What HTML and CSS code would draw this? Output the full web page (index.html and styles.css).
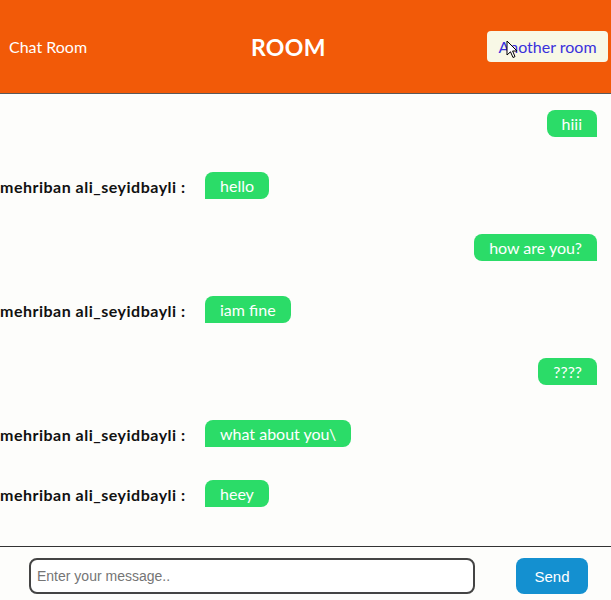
FILE: index.html
```html
<!DOCTYPE html>
<html>
<head>
<meta charset="utf-8">
<link rel="stylesheet" href="styles.css">
</head>
<body>
<div class="page">
  <header class="header">
    <div class="brand">Chat Room</div>
    <div class="title">ROOM</div>
    <button class="room-btn">Another room
      <svg class="cursor" width="12" height="19" viewBox="0 0 12 19"><path d="M1 1 L1 15 L4.5 11.8 L7 17.5 L9 16.6 L6.6 11 L11 11 Z" fill="#fff" stroke="#000" stroke-width="1" stroke-linejoin="round"/></svg>
    </button>
  </header>
  <main class="messages">
    <div class="row out"><span class="bubble">hiii</span></div>
    <div class="row in"><span class="name">mehriban ali_seyidbayli :</span><span class="bubble">hello</span></div>
    <div class="row out"><span class="bubble">how are you?</span></div>
    <div class="row in"><span class="name">mehriban ali_seyidbayli :</span><span class="bubble">iam fine</span></div>
    <div class="row out"><span class="bubble">????</span></div>
    <div class="row in"><span class="name">mehriban ali_seyidbayli :</span><span class="bubble">what about you\</span></div>
    <div class="row in last"><span class="name">mehriban ali_seyidbayli :</span><span class="bubble">heey</span></div>
  </main>
  <footer class="composer">
    <input class="msg-input" type="text" placeholder="Enter your message..">
    <button class="send-btn">Send</button>
  </footer>
</div>
</body>
</html>
```
FILE: styles.css
```css
* { box-sizing: border-box; }
html, body { margin: 0; padding: 0; }
body {
  background: #fdfdfb;
  font-family: "Lato", "Open Sans", sans-serif;
}
.page {
  height: 600px;
  display: flex;
  flex-direction: column;
}
.header {
  height: 94px;
  flex: none;
  background: #f25a08;
  border-bottom: 1px solid #5a5a5a;
  display: flex;
  align-items: center;
  padding: 0 3px 0 9px;
}
.brand {
  color: #fff;
  font-size: 16px;
  width: 242px;
  flex: none;
}
.title {
  color: #fff;
  font-size: 23px;
  font-weight: 700;
  letter-spacing: 0.3px;
  flex: none;
}
.room-btn {
  position: relative;
  margin-left: auto;
  width: 121px;
  height: 31px;
  background: #f8f8e6;
  border: none;
  border-radius: 4px;
  color: #3a30dc;
  font-family: "Lato", sans-serif;
  font-size: 16px;
  padding: 0;
  text-align: center;
}
.cursor {
  position: absolute;
  left: 19px;
  top: 9px;
}
.messages {
  flex: 1;
  display: flex;
  flex-direction: column;
  gap: 35px;
  padding: 16px 14px 0 0;
}
.row {
  display: flex;
  align-items: flex-end;
  height: 27px;
}
.row.out { justify-content: flex-end; }
.row.last { margin-top: -2px; }
.name {
  width: 205px;
  font-weight: 700;
  font-size: 16px;
  letter-spacing: 0.5px;
  color: #111;
  line-height: 20px;
  padding-bottom: 2px;
}
.bubble {
  background: #2bdc68;
  color: #fff;
  font-size: 16px;
  height: 27px;
  line-height: 27px;
  padding: 0 15px;
}
.out .bubble { border-radius: 8px 8px 0 8px; }
.in .bubble { border-radius: 8px 8px 8px 0; }
.composer {
  height: 54px;
  flex: none;
  border-top: 1px solid #333;
  display: flex;
  align-items: flex-start;
  padding: 11px 0 0 29px;
}
.msg-input {
  width: 446px;
  height: 36px;
  border: 2px solid #444;
  border-radius: 8px;
  background: #fff;
  font-family: "Liberation Sans", Arial, sans-serif;
  font-size: 14px;
  padding: 0 6px;
  color: #333;
}
.msg-input::placeholder { color: #757575; }
.send-btn {
  margin-left: 41px;
  width: 72px;
  height: 36px;
  border: none;
  border-radius: 8px;
  background: #1490d0;
  color: #fff;
  font-family: "Liberation Sans", Arial, sans-serif;
  font-size: 15px;
}
```
